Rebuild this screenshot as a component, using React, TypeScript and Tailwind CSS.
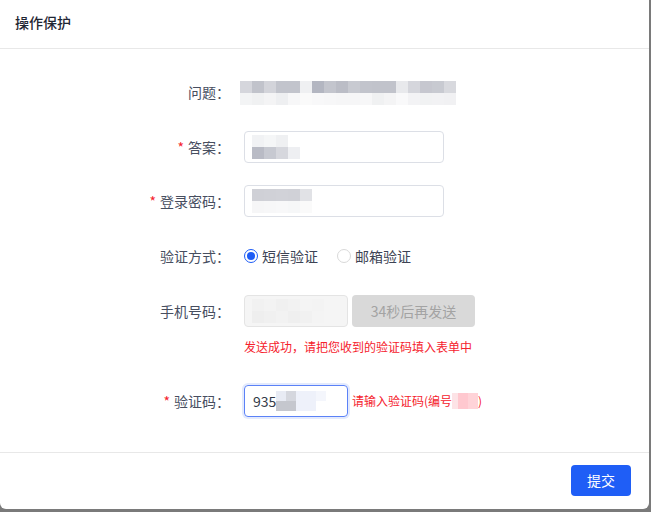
import type React from "react";

// pixelated blur blocks that cover private values in the screenshot
function Mosaic({ rows, size = 12 }: { rows: string[][]; size?: number }) {
  return (
    <div className="flex flex-col">
      {rows.map((row, i) => (
        <div key={i} className="flex">
          {row.map((c, j) => (
            <div key={j} style={{ width: size, height: size, background: c }} />
          ))}
        </div>
      ))}
    </div>
  );
}

function Label({ children, required }: { children: React.ReactNode; required?: boolean }) {
  return (
    <div className="w-[244px] shrink-0 pr-[14px] text-right text-[14px] text-[#474e5f]">
      {required && <span className="mr-[4px] text-[#f5222d]">*</span>}
      {children}：
    </div>
  );
}

function Radio({ checked, label }: { checked?: boolean; label: string }) {
  return (
    <label className="flex items-center gap-[4px] text-[14px] text-[#3d4354]">
      <span
        className={
          checked
            ? "flex h-[14px] w-[14px] items-center justify-center rounded-full border border-[#1d5cf6] bg-white"
            : "h-[14px] w-[14px] rounded-full border border-[#d9d9d9] bg-white"
        }
      >
        {checked && <span className="h-[8px] w-[8px] rounded-full bg-[#1d5cf6]" />}
      </span>
      {label}
    </label>
  );
}

export default function App() {
  return (
    <div
      className="h-[512px] w-[651px] overflow-hidden bg-[#7a7a7a]"
      style={{ fontFamily: '"Noto Sans CJK SC", "Noto Sans", sans-serif' }}
    >
      <div className="flex h-[509px] w-[649px] flex-col rounded-b-[6px] bg-white">
        <div className="flex h-[49px] shrink-0 items-center border-b border-[#e8e8e8] px-[15px] pb-[3px]">
          <h1 className="text-[14px] font-medium text-[#1f2633]">操作保护</h1>
        </div>

        <div className="flex flex-1 flex-col pt-[27px]">
          <div className="flex h-[32px] items-center">
            <Label>问题</Label>
            <div className="ml-[-4px] pt-[1px]">
              <Mosaic
                rows={[
                  ["#d5d6dc", "#c1c3cb", "#d3d4da", "#c2c4cc", "#c2c4cc", "#eff0f2", "#b3b6c1", "#c3c5cd", "#bbbdc6", "#c8cad1", "#c2c4cc", "#c1c3cb", "#c1c3cb", "#e8e9ec", "#d5d6dc", "#c6c7cf", "#c8cad1", "#d8d9de"],
                  ["#f3f4f5", "#f0f1f2", "#f4f4f5", "#eeeff1", "#f7f7f8", "#fafafa", "#f8f8f9", "#f7f7f8", "#f6f6f7", "#f6f6f7", "#f7f7f8", "#f0f1f2", "#f4f4f5", "#f9f9fa", "#f3f3f5", "#f1f2f3", "#f2f2f4", "#f1f1f3"],
                ]}
              />
            </div>
          </div>

          <div className="mt-[23px] flex h-[32px] items-center">
            <Label required>答案</Label>
            <div className="flex h-[32px] w-[200px] items-center rounded-[4px] border border-[#dcdfe6] px-[7px]">
              <Mosaic
                rows={[
                  ["#f1f2f4", "#f5f6f7", "#eff0f2", "#ffffff"],
                  ["#b9bbc5", "#c7c9d1", "#d6d7dd", "#eeeff2"],
                ]}
              />
            </div>
          </div>

          <div className="mt-[22px] flex h-[32px] items-center">
            <Label required>登录密码</Label>
            <div className="flex h-[32px] w-[200px] items-center rounded-[4px] border border-[#dcdfe6] px-[7px]">
              <Mosaic
                rows={[
                  ["#cfd0d6", "#d0d1d7", "#d1d2d8", "#d0d1d7", "#e1e2e6"],
                  ["#f6f6f7", "#f7f7f8", "#f8f8f9", "#f6f7f8", "#fafafa"],
                ]}
              />
            </div>
          </div>

          <div className="mt-[23px] flex h-[32px] items-center">
            <Label>验证方式</Label>
            <div className="flex items-center gap-[19px]">
              <Radio checked label="短信验证" />
              <Radio label="邮箱验证" />
            </div>
          </div>

          <div className="mt-[23px] flex h-[32px] items-center">
            <Label>手机号码</Label>
            <div className="flex h-[32px] w-[104px] items-center rounded-[4px] border border-[#e4e4e4] bg-[#f5f5f5] px-[7px]">
              <Mosaic
                rows={[
                  ["#f1f1f1", "#f3f3f3", "#f0f0f0", "#f2f2f2", "#f4f4f4", "#f3f3f3", "#f5f5f5"],
                  ["#eeeeee", "#f0f0f0", "#f2f2f2", "#efefef", "#f1f1f1", "#f4f4f4", "#f5f5f5"],
                ]}
              />
            </div>
            <button
              type="button"
              disabled
              className="ml-[4px] h-[32px] w-[123px] rounded-[4px] bg-[#d9d9d9] text-[14px] text-[#a3a3a3]"
            >
              34秒后再发送
            </button>
          </div>

          <div className="mt-[11px] flex h-[18px] items-center">
            <div className="w-[244px] shrink-0" />
            <p className="text-[12px] text-[#f5222d]">发送成功，请把您收到的验证码填入表单中</p>
          </div>

          <div className="mt-[29px] flex h-[32px] items-center">
            <Label required>验证码</Label>
            <div className="flex h-[32px] w-[104px] items-center rounded-[4px] border border-[#5b82f7] px-[8px] shadow-[0_0_0_2px_#e3eafd]">
              <span className="text-[14px] text-[#333a48]">935</span>
              <Mosaic
                size={10}
                rows={[
                  ["#e8ebf4", "#d5d7de", "#eef1fa", "#eef1fa", "#f4f6fc"],
                  ["#c5c7ce", "#c5c7ce", "#eef1fa", "#eef1fa", "#ffffff"],
                ]}
              />
            </div>
            <div className="ml-[4px] flex items-center text-[12px] text-[#f5222d]">
              请输入验证码(编号
              <span className="flex">
                <span className="h-[16px] w-[6px] bg-[#fde3e6]" />
                <span className="h-[16px] w-[10px] bg-[#ffc8cf]" />
                <span className="h-[16px] w-[10px] bg-[#ffd3d8]" />
              </span>
              )
            </div>
          </div>
        </div>

        <div className="flex h-[57px] shrink-0 items-start justify-end border-t border-[#e8e8e8] px-[18px] pt-[12px]">
          <button
            type="submit"
            className="h-[31px] w-[60px] rounded-[4px] bg-[#1f5ef6] text-[14px] text-white"
          >
            提交
          </button>
        </div>
      </div>
    </div>
  );
}
